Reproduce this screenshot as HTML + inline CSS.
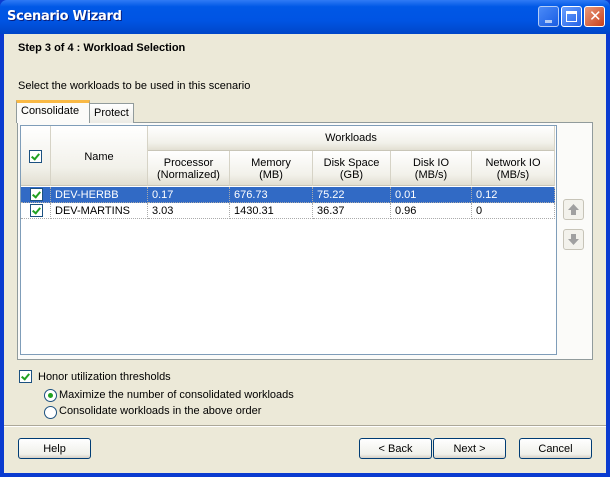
<!DOCTYPE html>
<html><head><style>
*{margin:0;padding:0;box-sizing:border-box}
body{width:610px;height:477px;overflow:hidden;font-family:Tahoma,"Liberation Sans",sans-serif;font-size:11px;position:relative;background:#0a3bd0}
.abs{position:absolute}
#title{left:0;top:0;width:610px;height:34px;background:linear-gradient(#2f7bf5,#0058e6 20%,#0054e3 60%,#0046c8);border-radius:7px 7px 0 0}
#title span{position:absolute;left:7px;top:9px;color:#fff;font-weight:bold;font-size:13px;font-family:"DejaVu Sans",sans-serif;text-shadow:1px 1px #0a1f7a;letter-spacing:-0.3px}
.tb{position:absolute;top:6px;width:21px;height:21px;border:1px solid #fff;border-radius:3px;background:linear-gradient(135deg,#6aa0ff,#2563e6)}
#body{left:4px;top:34px;width:602px;height:439px;background:#ece9d8}
.cb{position:absolute;width:13px;height:13px;border:1px solid #1c5180;background:#fff}
.cb:after{content:"";position:absolute;left:3px;top:1px;width:3px;height:6px;border:solid #21a121;border-width:0 2px 2px 0;transform:rotate(40deg)}
.rd{position:absolute;width:13px;height:13px;border:1px solid #1c5180;border-radius:50%;background:#fff}
.btn{position:absolute;top:438px;width:73px;height:21px;border:1px solid #003c74;border-radius:3px;background:linear-gradient(#fff,#f0f0ea 80%,#d6d0c5);text-align:center;line-height:20px}
.hd{position:absolute;background:linear-gradient(#fff,#f2f1ea 70%,#e2dfd2);border-right:1px solid #d6d3c6;border-bottom:1px solid #c9c6b8;text-align:center;color:#000;font-family:"Liberation Sans",sans-serif}
.cell{position:absolute;height:16px;line-height:16px;padding-left:4px;border-right:1px dotted #aaa;border-bottom:1px dotted #aaa;font-family:"Liberation Sans",sans-serif;font-size:11px}
.sel{background:#316ac5;color:#fff}
.ab{position:absolute;left:563px;width:21px;height:21px;border:1px solid #c7c4b8;border-radius:3px;background:#f3f2ec}
</style></head><body>
<div id="title" class="abs"><span>Scenario Wizard</span>
<div class="tb" style="left:538px;opacity:.7"><div class="abs" style="left:6px;top:13px;width:7px;height:3px;background:#fff"></div></div>
<div class="tb" style="left:561px"><div class="abs" style="left:4px;top:4px;width:11px;height:11px;border:1px solid #fff;border-top-width:3px"></div></div>
<div class="tb" style="left:584px;background:linear-gradient(135deg,#e89a7c,#c9401c)"><span style="left:4px;top:0px;font-size:15px;text-shadow:none">✕</span></div>
</div>
<div id="body" class="abs"></div>
<div class="abs" style="left:18px;top:42px;font-weight:bold;font-size:11px">Step 3 of 4 : Workload Selection</div>
<div class="abs" style="left:18px;top:80px">Select the workloads to be used in this scenario</div>
<div class="abs" style="left:17px;top:122px;width:576px;height:238px;border:1px solid #919b9c;background:#fbfbf9"></div>
<div class="abs" style="left:89px;top:103px;width:45px;height:20px;border:1px solid #919b9c;border-bottom:none;background:linear-gradient(#fff,#ecebe5);padding:3px 0 0 4px">Protect</div>
<div class="abs" style="left:16px;top:100px;width:74px;height:23px;border:1px solid #919b9c;border-top:3px solid #f9b945;border-bottom:none;background:#fbfbf9;padding:2px 0 0 4px">Consolidate</div>
<div class="abs" style="left:20px;top:125px;width:537px;height:230px;border:1px solid #7f9db9;background:#fff"></div>
<div class="hd" style="left:21px;top:126px;width:30px;height:60px"></div>
<div class="cb" style="left:29px;top:150px"></div>
<div class="hd" style="left:51px;top:126px;width:97px;height:60px;line-height:62px">Name</div>
<div class="hd" style="left:148px;top:126px;width:407px;height:25px;line-height:25px">Workloads</div>
<div class="hd" style="left:148px;top:151px;width:82px;height:35px;padding-top:6px;line-height:12px">Processor<br>(Normalized)</div>
<div class="hd" style="left:230px;top:151px;width:83px;height:35px;padding-top:6px;line-height:12px">Memory<br>(MB)</div>
<div class="hd" style="left:313px;top:151px;width:78px;height:35px;padding-top:6px;line-height:12px">Disk Space<br>(GB)</div>
<div class="hd" style="left:391px;top:151px;width:81px;height:35px;padding-top:6px;line-height:12px">Disk IO<br>(MB/s)</div>
<div class="hd" style="left:472px;top:151px;width:83px;height:35px;padding-top:6px;line-height:12px">Network IO<br>(MB/s)</div>
<div class="cell sel" style="left:21px;top:187px;width:30px"></div>
<div class="cell sel" style="left:51px;top:187px;width:97px">DEV-HERBB</div>
<div class="cell sel" style="left:148px;top:187px;width:82px">0.17</div>
<div class="cell sel" style="left:230px;top:187px;width:83px">676.73</div>
<div class="cell sel" style="left:313px;top:187px;width:78px">75.22</div>
<div class="cell sel" style="left:391px;top:187px;width:81px">0.01</div>
<div class="cell sel" style="left:472px;top:187px;width:83px">0.12</div>
<div class="cell" style="left:21px;top:203px;width:30px"></div>
<div class="cell" style="left:51px;top:203px;width:97px">DEV-MARTINS</div>
<div class="cell" style="left:148px;top:203px;width:82px">3.03</div>
<div class="cell" style="left:230px;top:203px;width:83px">1430.31</div>
<div class="cell" style="left:313px;top:203px;width:78px">36.37</div>
<div class="cell" style="left:391px;top:203px;width:81px">0.96</div>
<div class="cell" style="left:472px;top:203px;width:83px">0</div>
<div class="cb" style="left:30px;top:188px"></div>
<div class="cb" style="left:30px;top:204px"></div>
<div class="ab" style="top:199px"><svg width="19" height="19"><path d="M9.5 4L15 10H12V15H7V10H4Z" fill="#a0a0a0"/></svg></div>
<div class="ab" style="top:229px"><svg width="19" height="19"><path d="M9.5 15L15 9H12V4H7V9H4Z" fill="#a0a0a0"/></svg></div>
<div class="cb" style="left:19px;top:370px"></div>
<div class="abs" style="left:38px;top:371px">Honor utilization thresholds</div>
<div class="rd" style="left:44px;top:389px"><div class="abs" style="left:3px;top:3px;width:5px;height:5px;border-radius:50%;background:#21a121"></div></div>
<div class="abs" style="left:59px;top:389px">Maximize the number of consolidated workloads</div>
<div class="rd" style="left:44px;top:406px"></div>
<div class="abs" style="left:59px;top:405px">Consolidate workloads in the above order</div>
<div class="abs" style="left:4px;top:425px;width:602px;height:2px;border-top:1px solid #aca899;border-bottom:1px solid #fff"></div>
<div class="btn" style="left:18px">Help</div>
<div class="btn" style="left:359px">&lt; Back</div>
<div class="btn" style="left:433px">Next &gt;</div>
<div class="btn" style="left:519px">Cancel</div>
</body></html>
